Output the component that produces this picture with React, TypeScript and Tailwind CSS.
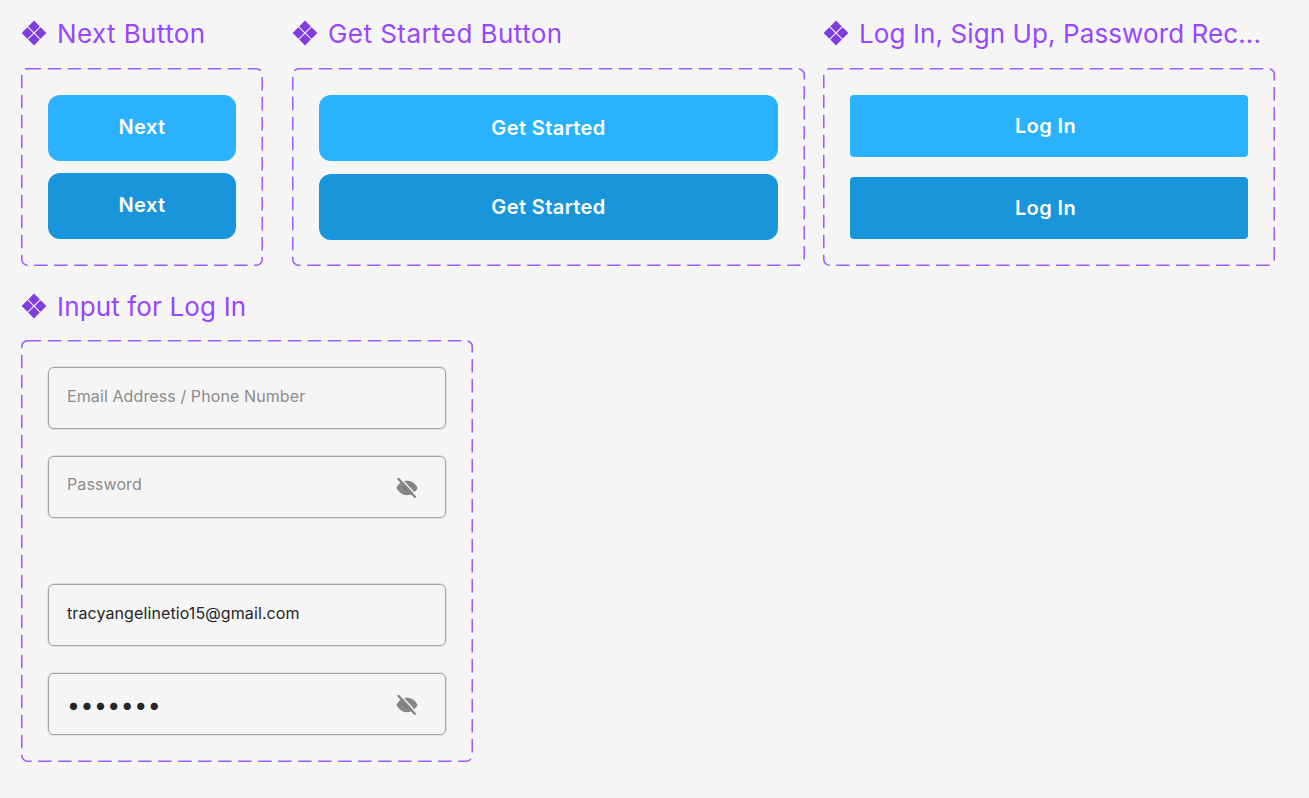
import type { ReactNode } from 'react';

function ComponentIcon() {
  return (
    <svg width="26" height="26" viewBox="0 0 26 26" className="shrink-0 fill-[#7F3CE0]">
      <path d="M13 .6 18.800 6.400 13 12.200 7.200 6.400Z" />
      <path d="M19.600 7.200 25.400 13 19.600 18.800 13.800 13Z" />
      <path d="M6.400 7.200 12.200 13 6.400 18.800 .6 13Z" />
      <path d="M13 13.800 18.800 19.600 13 25.400 7.200 19.600Z" />
    </svg>
  );
}

function EyeOff() {
  return (
    <svg width="24" height="24" viewBox="0 0 24 24" className="shrink-0 translate-y-px">
      <path
        d="M1.500 12C3.800 7.300 7.600 4.800 12 4.800S20.200 7.300 22.500 12C20.200 16.700 16.400 19.200 12 19.200S3.800 16.700 1.500 12Z"
        className="fill-[#858585]"
      />
      <circle cx="12" cy="12" r="2.600" className="fill-[#6F6F6F]" />
      <path d="M5.200 1.800 21.200 19.300" strokeWidth="1.600" className="stroke-[#F5F5F5]" />
      <path d="M3.600 3 19.800 20.800" strokeWidth="2.400" strokeLinecap="round" className="stroke-[#858585]" />
    </svg>
  );
}

function Title({ track, children }: { track: string; children: ReactNode }) {
  return (
    <div className={`flex h-[26px] items-center gap-[10px] text-[26px] leading-none whitespace-nowrap text-[#9747FF] ${track}`}>
      <ComponentIcon />
      <span className="translate-y-px">{children}</span>
    </div>
  );
}

// figma style dashed outline
function Frame({ className, children }: { className: string; children: ReactNode }) {
  return (
    <div className={`relative flex flex-col ${className}`}>
      <svg className="absolute inset-0 h-full w-full fill-none stroke-[#A05CFF]">
        <rect x="0.75" y="0.75" rx="6" strokeWidth="1.600" strokeDasharray="13.500 6.500" className="h-[calc(100%-1.5px)] w-[calc(100%-1.5px)]" />
      </svg>
      {children}
    </div>
  );
}

function Btn({ className, children }: { className: string; children: ReactNode }) {
  return (
    <button className={`flex w-full items-center justify-center text-[20px] leading-none font-semibold tracking-[0.4px] text-white ${className}`}>
      {children}
    </button>
  );
}

function Field({ className = '', children, eye }: { className?: string; children: ReactNode; eye?: boolean }) {
  return (
    <div className={`flex h-[62px] items-center justify-between rounded-[6px] border border-[#A3A3A3] pr-[26px] pl-[18px] shadow-[0_0_0_1px_#E0E0E0] ${className}`}>
      <span className="-translate-y-[2px] text-[16px] leading-none tracking-[0.1px]">{children}</span>
      {eye && <EyeOff />}
    </div>
  );
}

export default function App() {
  return (
    <div className="h-[798px] bg-[#F5F5F5] pt-[20px] pl-[21px] font-[Inter,sans-serif]">
      <div className="flex">
        <div className="w-[242px]">
          <Title track="tracking-[0.4px]">Next Button</Title>
          <Frame className="mt-[22px] h-[198px] px-[27px] pt-[27px]">
            <Btn className="h-[66px] rounded-[12px] bg-[#2AB2FF] pb-[2px]">Next</Btn>
            <Btn className="mt-[12px] h-[66px] rounded-[12px] bg-[#1995DC] pb-[2px]">Next</Btn>
          </Frame>
        </div>
        <div className="ml-[29px] w-[513px]">
          <Title track="tracking-[0.45px]">Get Started Button</Title>
          <Frame className="mt-[22px] h-[198px] px-[27px] pt-[27px]">
            <Btn className="h-[66px] rounded-[12px] bg-[#2AB2FF]">Get Started</Btn>
            <Btn className="mt-[13px] h-[66px] rounded-[12px] bg-[#1995DC]">Get Started</Btn>
          </Frame>
        </div>
        <div className="ml-[18px] w-[452px]">
          <Title track="tracking-[0.1px]">Log In, Sign Up, Password Rec...</Title>
          <Frame className="mt-[22px] h-[198px] px-[27px] pt-[27px]">
            <Btn className="h-[62px] rounded-[4px] bg-[#2AB2FF] pr-[7px]">Log In</Btn>
            <Btn className="mt-[20px] h-[62px] rounded-[4px] bg-[#1995DC] pr-[7px]">Log In</Btn>
          </Frame>
        </div>
      </div>
      <div className="mt-[27px] w-[452px]">
        <Title track="tracking-[0.15px]">Input for Log In</Title>
        <Frame className="mt-[21px] h-[422px] px-[27px] pt-[27px]">
          <Field className="text-[#8C8C8C]">Email Address / Phone Number</Field>
          <Field className="mt-[27px] text-[#8C8C8C]" eye>
            <span className="relative -top-px">Password</span>
          </Field>
          <Field className="mt-[66px] text-[#262626]">tracyangelinetio15@gmail.com</Field>
          <Field className="mt-[27px] text-[#262626]" eye>
            <span className="relative top-[3px] text-[23px] tracking-[0.5px]">•••••••</span>
          </Field>
        </Frame>
      </div>
    </div>
  );
}
